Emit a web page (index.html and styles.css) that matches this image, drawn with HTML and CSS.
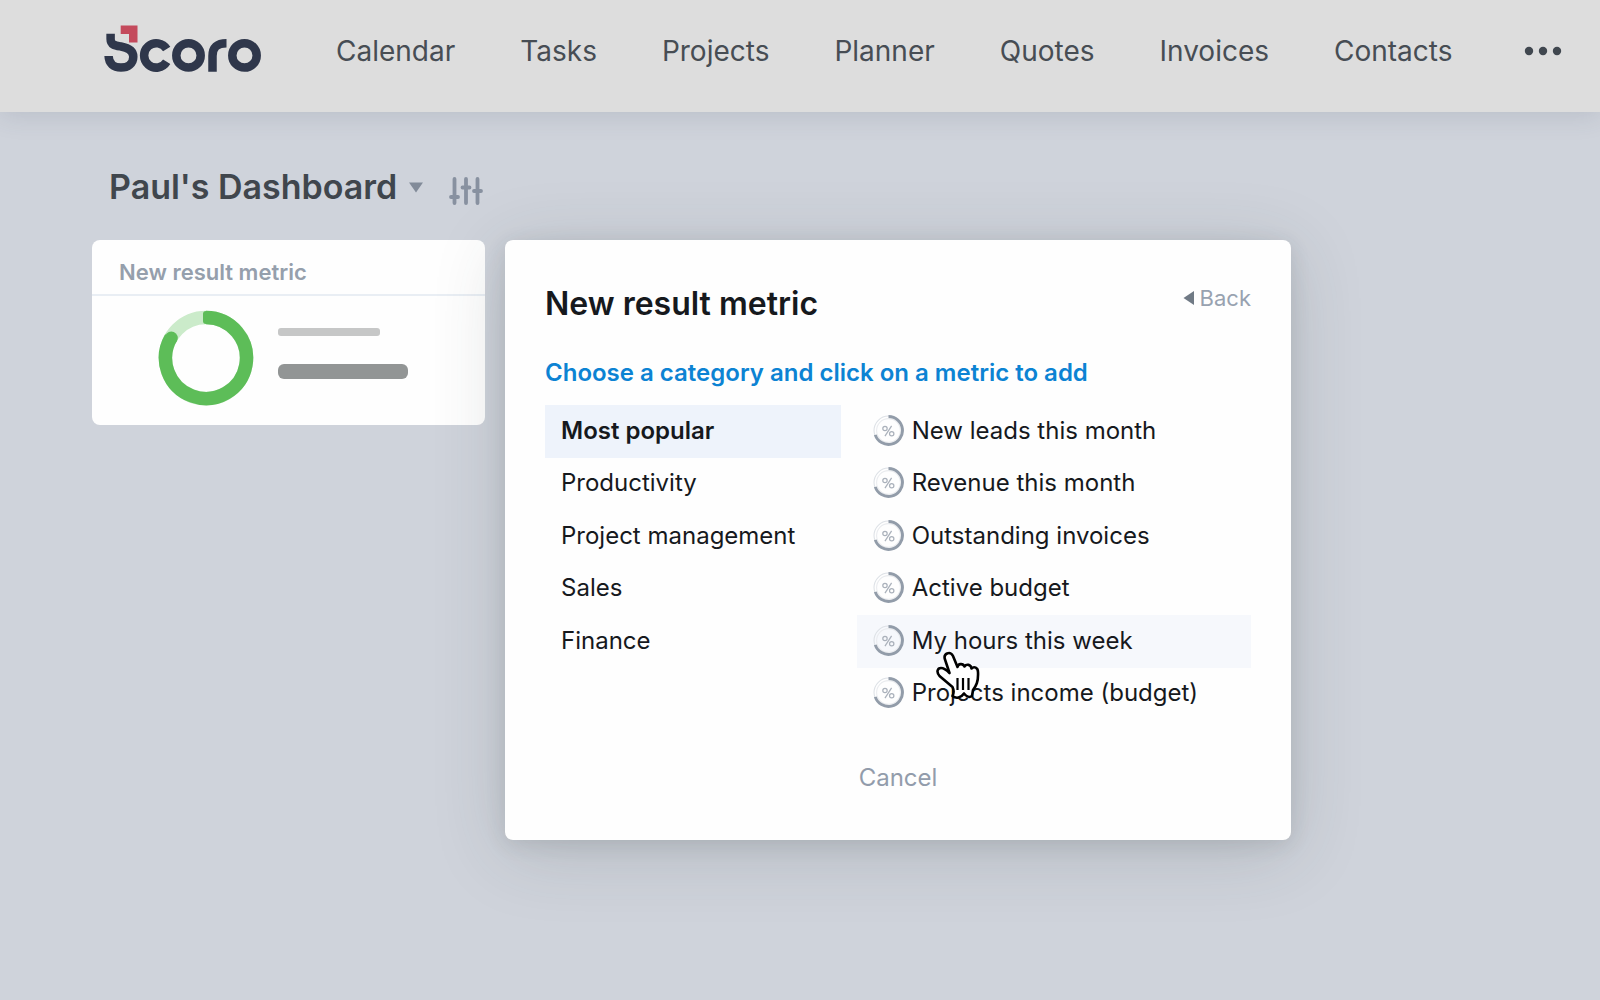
FILE: index.html
```html
<!DOCTYPE html>
<html lang="en">
<head>
    <meta charset="UTF-8">
    <meta name="viewport" content="width=device-width, initial-scale=1.0">
    <title>Paul's Dashboard</title>
    <link rel="stylesheet" href="styles.css">
</head>
<body>
    <!-- shared ring icon used by every metric -->
    <svg class="sprite" aria-hidden="true">
        <symbol id="metric" viewBox="0 0 30 30">
            <circle cx="15" cy="15" r="14" fill="none" stroke="#dde1e6" stroke-width="1"/>
            <circle cx="15" cy="15" r="11.5" fill="none" stroke="#e9ebee" stroke-width="1"/>
            <path d="M15 1.5A13.5 13.5 0 1 1 2.2 19.2" fill="none" stroke="#929ca9" stroke-width="2.800"/>
            <circle cx="11.6" cy="13" r="2.100" fill="none" stroke="#aab1bb" stroke-width="1.200"/>
            <circle cx="18.1" cy="18.2" r="2.100" fill="none" stroke="#aab1bb" stroke-width="1.200"/>
            <path d="M18 10.5L11.6 20.5" stroke="#aab1bb" stroke-width="1.200"/>
        </symbol>
    </svg>

    <header class="topbar">
        <a class="logo" href="#" aria-label="Scoro">
            <svg width="158" height="52" viewBox="0 0 158 52" fill="none" stroke="#2f374b" stroke-width="8.500">
                <path d="M16.700 0.500H33.500V17.500H25V9H16.700z" fill="#c44a5c" stroke="none"/>
                <path d="M6.600 8.700V14C6.600 20 11 20.500 17 21.500C25 23 29.300 26 29.300 31.700C29.300 38.500 24 42.500 17 42.500C9.500 42.500 4.800 38.500 4.600 31"/>
                <path d="M62.700 24A12.200 12.200 0 1 0 62.700 36.800"/>
                <circle cx="84.500" cy="30.400" r="12.200"/>
                <path d="M108.500 46.700V31C108.500 22.500 113 18.300 122.500 18.300"/>
                <circle cx="140.500" cy="30.400" r="12.200"/>
            </svg>
        </a>
        <nav class="menu">
            <a href="#">Calendar</a>
            <a href="#">Tasks</a>
            <a href="#">Projects</a>
            <a href="#">Planner</a>
            <a href="#">Quotes</a>
            <a href="#">Invoices</a>
            <a href="#">Contacts</a>
        </nav>
        <button class="more" aria-label="More">
            <svg width="38" height="10" viewBox="0 0 38 10" fill="#40474f">
                <circle cx="5" cy="5" r="4.200"/>
                <circle cx="19" cy="5" r="4.200"/>
                <circle cx="33" cy="5" r="4.200"/>
            </svg>
        </button>
    </header>

    <main class="page">
        <div class="page-title">
            <h1>Paul's Dashboard</h1>
            <button aria-label="Switch dashboard">
                <svg width="14" height="11" viewBox="0 0 14 11"><path d="M0 0.500h14L7 10.500z" fill="#828b99"/></svg>
            </button>
            <button class="settings" aria-label="Dashboard settings">
                <svg width="34" height="28" viewBox="0 0 34 28" stroke="#8891a0" stroke-width="3.800" stroke-linecap="round">
                    <path d="M5.500 2v24M17 2v24M28.500 2v24M2 20h7M13.500 10.500h7M25 14h7"/>
                </svg>
            </button>
        </div>

        <div class="content">
            <section class="card">
                <h2>New result metric</h2>
                <div class="preview">
                    <svg width="96" height="96" viewBox="0 0 96 96" fill="none" stroke-width="13.500">
                        <circle cx="48" cy="48" r="40.500" stroke="#cbebca"/>
                        <path d="M48 7.500A40.500 40.500 0 1 1 13 27.600" stroke="#5dbd58"/>
                        <rect x="45" y="1" width="8" height="13" rx="3" fill="#5dbd58"/>
                        <circle cx="13.300" cy="28" r="6.500" fill="#5dbd58"/>
                    </svg>
                    <div class="lines">
                        <div class="line-light"></div>
                        <div class="line-dark"></div>
                    </div>
                </div>
            </section>

            <section class="dialog" role="dialog" aria-labelledby="dialogTitle">
                <div class="dialog-head">
                    <h2 id="dialogTitle">New result metric</h2>
                    <button class="back">
                        <svg width="11" height="14" viewBox="0 0 11 14"><path d="M11 0v14L0.500 7z" fill="#707a85"/></svg>
                        Back
                    </button>
                </div>
                <h3>Choose a category and click on a metric to add</h3>
                <div class="picker">
                    <div class="list">
                        <button class="item active">Most popular</button>
                        <button class="item">Productivity</button>
                        <button class="item">Project management</button>
                        <button class="item">Sales</button>
                        <button class="item">Finance</button>
                    </div>
                    <div class="list">
                        <button class="item"><svg class="icon"><use href="#metric"/></svg>New leads this month</button>
                        <button class="item"><svg class="icon"><use href="#metric"/></svg>Revenue this month</button>
                        <button class="item"><svg class="icon"><use href="#metric"/></svg>Outstanding invoices</button>
                        <button class="item"><svg class="icon"><use href="#metric"/></svg>Active budget</button>
                        <button class="item hovered">
                            <svg class="icon"><use href="#metric"/></svg>My hours this week
                            <svg class="pointer" viewBox="0 0 46 52" aria-hidden="true">
                                <path d="M17.500 36L4.500 25C1 21 2.500 17 6 17C8.500 17 11 18.500 14.500 22L10 8.500C8 2.500 15 -0.500 18 5L22.500 16C23 12.500 28 12 29.500 15.500C31.500 12.500 36 13.500 36.500 17.500C39 15 43 16.500 43 21C43.500 31 41 35 38 39L37 45C34 47 32 46 29 42.500C26 47 21 48 17.500 45C19.500 41 19 39 17.500 36Z" fill="#fff" stroke="#000" stroke-width="2.600" stroke-linejoin="round"/>
                                <path d="M22.500 27v12M28 27v12M33.500 27v12" stroke="#000" stroke-width="2.200"/>
                            </svg>
                        </button>
                        <button class="item"><svg class="icon"><use href="#metric"/></svg>Projects income (budget)</button>
                    </div>
                </div>
                <button class="cancel">Cancel</button>
            </section>
        </div>
    </main>
</body>
</html>
```
FILE: styles.css
```css
* {
    box-sizing: border-box;
}
body {
    margin: 0;
    min-height: 100vh;
    background: #cfd3db;
    font-family: Inter, "Liberation Sans", sans-serif;
    color: #16191d;
}
h1, h2, h3 {
    margin: 0;
    font-weight: 600;
}
svg {
    display: block;
    flex-shrink: 0;
}
button {
    display: flex;
    align-items: center;
    padding: 0;
    border: none;
    background: none;
    color: inherit;
    font: inherit;
    cursor: pointer;
}
.sprite {
    position: absolute;
    width: 0;
    height: 0;
}
.topbar {
    display: flex;
    align-items: center;
    height: 112px;
    padding: 0 38px 10px 104px;
    background: #dddddd;
    box-shadow: 0 4px 24px rgba(60, 70, 90, 0.14);
}
.menu {
    display: flex;
    flex: 1;
    gap: 65px;
    margin-left: 74px;
}
.menu a {
    color: #474d54;
    font-size: 28px;
    line-height: 36px;
    text-decoration: none;
}
.page {
    padding: 50px 92px;
}
.page-title {
    display: flex;
    align-items: center;
    gap: 12px;
    height: 50px;
    margin-bottom: 28px;
    padding-left: 17px;
    color: #40464d;
}
.page-title h1 {
    font-size: 34px;
    line-height: 50px;
}
.settings {
    margin: 8px 0 0 14px;
}
.content {
    display: flex;
    align-items: flex-start;
    gap: 20px;
}
.card {
    flex: 0 1 393px;
    background: #fefefe;
    border-radius: 8px;
    overflow: hidden;
}
.card h2 {
    height: 56px;
    padding: 8px 27px 0;
    border-bottom: 2px solid #e9eef4;
    color: #959fac;
    font-size: 22px;
    line-height: 48px;
}
.preview {
    display: flex;
    align-items: flex-start;
    justify-content: center;
    gap: 24px;
    height: 129px;
    padding: 14px 12px 0 0;
}
.lines {
    padding-top: 18px;
}
.line-light {
    width: 102px;
    height: 8px;
    margin-bottom: 28px;
    border-radius: 3px;
    background: #c6c7c7;
}
.line-dark {
    width: 130px;
    height: 15px;
    border-radius: 6px;
    background: #929595;
}
.dialog {
    flex: 0 1 786px;
    padding: 40px 40px 44px;
    background: #fefefe;
    border-radius: 8px;
    box-shadow: 0 12px 72px rgba(50, 60, 60, 0.18), 0 4px 20px rgba(50, 60, 60, 0.12);
}
.dialog-head {
    display: flex;
    align-items: flex-start;
    justify-content: space-between;
}
.dialog-head h2 {
    font-size: 32px;
    line-height: 48px;
}
.back {
    gap: 6px;
    color: #98a2b0;
    font-size: 22px;
    line-height: 36px;
}
.dialog h3 {
    margin: 28px 0 15px;
    color: #0c83d3;
    font-size: 24px;
    line-height: 34px;
}
.picker {
    display: grid;
    grid-template-columns: 3fr 4fr;
    gap: 16px;
}
.list {
    display: grid;
    grid-template-rows: repeat(6, 1fr);
    height: 315px;
}
.item {
    position: relative;
    gap: 8px;
    padding: 0 16px 2px;
    font-size: 24px;
    text-align: left;
}
.active {
    background: #eef3fb;
    font-weight: 600;
}
.hovered {
    background: #f6f8fc;
}
.icon {
    width: 31px;
    height: 31px;
}
/* mouse pointer lies over the hovered row */
.pointer {
    position: absolute;
    z-index: 1;
    top: 36px;
    left: 78px;
    width: 46px;
    height: 52px;
}
.cancel {
    margin: 40px auto 0;
    color: #929cab;
    font-size: 24px;
    line-height: 36px;
}
```
